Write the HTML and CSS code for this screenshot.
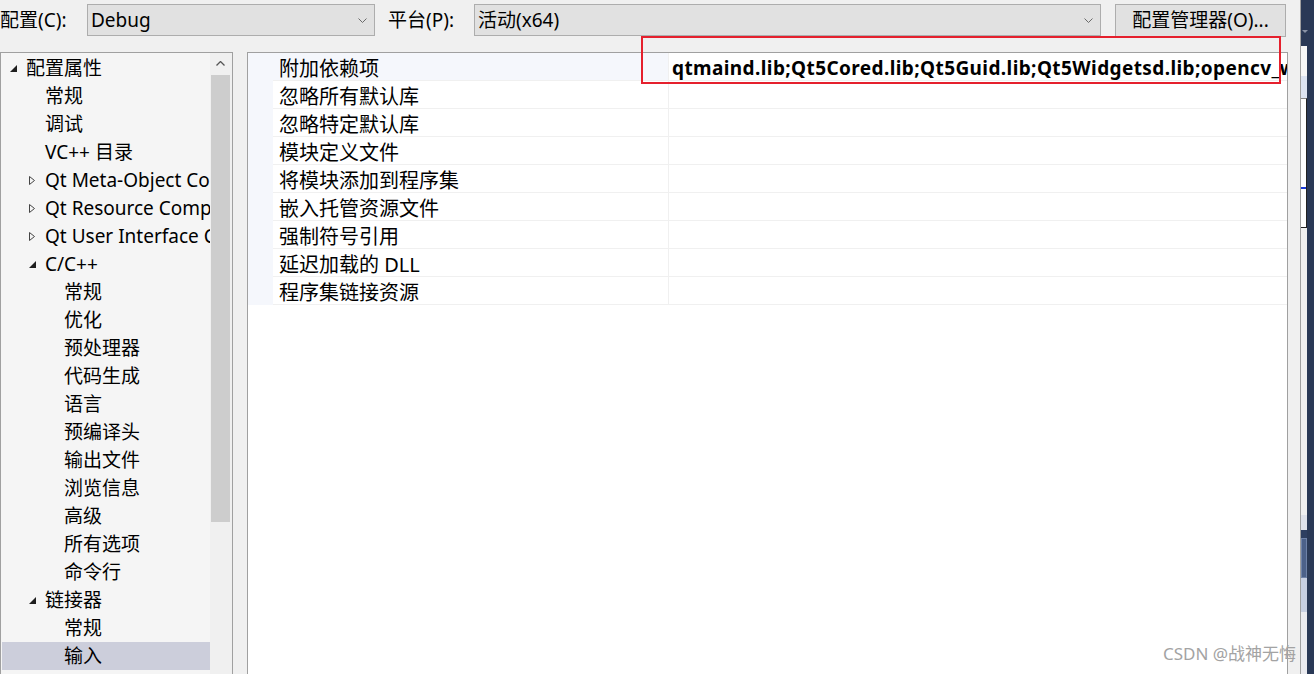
FILE: index.html
```html
<!DOCTYPE html>
<html lang="zh-CN">
<head>
	<meta charset="UTF-8">
	<title>属性页 - 链接器 输入</title>
	<link rel="stylesheet" href="styles.css">
</head>
<body>
<div class="page_wrap">
	<div class="dialog_wrap">
		<div class="header_wrap">
			<label class="header_label label_cfg">配置(C):</label>
			<div class="combo_box combo_cfg">
				<span class="combo_text">Debug</span>
				<svg class="combo_arrow" width="9" height="5" viewBox="0 0 9 5"><path d="M0.5 0.5 L4.5 4.5 L8.5 0.5" fill="none" stroke="#6a6a6a"/></svg>
			</div>
			<label class="header_label label_platform">平台(P):</label>
			<div class="combo_box combo_platform">
				<span class="combo_text">活动(x64)</span>
				<svg class="combo_arrow" width="9" height="5" viewBox="0 0 9 5"><path d="M0.5 0.5 L4.5 4.5 L8.5 0.5" fill="none" stroke="#6a6a6a"/></svg>
			</div>
			<button class="btn_manager">配置管理器(O)...</button>
		</div>
		<div class="body_wrap">
			<div class="tree_panel">
				<ul class="tree_list">
					<li class="tree_item lv1"><span class="twisty"><svg width="7" height="7" viewBox="0 0 7 7"><path d="M7 0 V7 H0 Z" fill="#1e1e1e"/></svg></span>配置属性</li>
					<li class="tree_item lv2 leaf">常规</li>
					<li class="tree_item lv2 leaf">调试</li>
					<li class="tree_item lv2 leaf">VC++ 目录</li>
					<li class="tree_item lv2"><span class="twisty"><svg width="6" height="9" viewBox="0 0 6 9"><path d="M0.5 0.5 L5.5 4.5 L0.5 8.5 Z" fill="none" stroke="#444"/></svg></span>Qt Meta-Object Compiler</li>
					<li class="tree_item lv2"><span class="twisty"><svg width="6" height="9" viewBox="0 0 6 9"><path d="M0.5 0.5 L5.5 4.5 L0.5 8.5 Z" fill="none" stroke="#444"/></svg></span>Qt Resource Compiler</li>
					<li class="tree_item lv2"><span class="twisty"><svg width="6" height="9" viewBox="0 0 6 9"><path d="M0.5 0.5 L5.5 4.5 L0.5 8.5 Z" fill="none" stroke="#444"/></svg></span>Qt User Interface Compiler</li>
					<li class="tree_item lv2"><span class="twisty"><svg width="7" height="7" viewBox="0 0 7 7"><path d="M7 0 V7 H0 Z" fill="#1e1e1e"/></svg></span>C/C++</li>
					<li class="tree_item lv3">常规</li>
					<li class="tree_item lv3">优化</li>
					<li class="tree_item lv3">预处理器</li>
					<li class="tree_item lv3">代码生成</li>
					<li class="tree_item lv3">语言</li>
					<li class="tree_item lv3">预编译头</li>
					<li class="tree_item lv3">输出文件</li>
					<li class="tree_item lv3">浏览信息</li>
					<li class="tree_item lv3">高级</li>
					<li class="tree_item lv3">所有选项</li>
					<li class="tree_item lv3">命令行</li>
					<li class="tree_item lv2"><span class="twisty"><svg width="7" height="7" viewBox="0 0 7 7"><path d="M7 0 V7 H0 Z" fill="#1e1e1e"/></svg></span>链接器</li>
					<li class="tree_item lv3">常规</li>
					<li class="tree_item lv3 on">输入</li>
				</ul>
				<div class="tree_scroll">
					<div class="scroll_btn"><svg width="9" height="5" viewBox="0 0 9 5"><path d="M0.5 4.5 L4.5 0.5 L8.5 4.5" fill="none" stroke="#555" stroke-width="1.3"/></svg></div>
					<div class="scroll_thumb"></div>
				</div>
			</div>
			<div class="grid_panel">
				<div class="grid_row on">
					<div class="grid_gutter"></div>
					<div class="grid_name">附加依赖项</div>
					<div class="grid_value">qtmaind.lib;Qt5Cored.lib;Qt5Guid.lib;Qt5Widgetsd.lib;opencv_world455d.lib;%(AdditionalDependencies)</div>
				</div>
				<div class="grid_row">
					<div class="grid_gutter"></div>
					<div class="grid_name">忽略所有默认库</div>
					<div class="grid_value"></div>
				</div>
				<div class="grid_row">
					<div class="grid_gutter"></div>
					<div class="grid_name">忽略特定默认库</div>
					<div class="grid_value"></div>
				</div>
				<div class="grid_row">
					<div class="grid_gutter"></div>
					<div class="grid_name">模块定义文件</div>
					<div class="grid_value"></div>
				</div>
				<div class="grid_row">
					<div class="grid_gutter"></div>
					<div class="grid_name">将模块添加到程序集</div>
					<div class="grid_value"></div>
				</div>
				<div class="grid_row">
					<div class="grid_gutter"></div>
					<div class="grid_name">嵌入托管资源文件</div>
					<div class="grid_value"></div>
				</div>
				<div class="grid_row">
					<div class="grid_gutter"></div>
					<div class="grid_name">强制符号引用</div>
					<div class="grid_value"></div>
				</div>
				<div class="grid_row">
					<div class="grid_gutter"></div>
					<div class="grid_name">延迟加载的 DLL</div>
					<div class="grid_value"></div>
				</div>
				<div class="grid_row">
					<div class="grid_gutter"></div>
					<div class="grid_name">程序集链接资源</div>
					<div class="grid_value"></div>
				</div>
			</div>
		</div>
	</div>
	<div class="side_strip">
		<div class="strip_col">
			<div class="blk blk_navy"><span class="blk_arrow"></span></div>
			<div class="blk blk_white"></div>
			<div class="blk blk_blue"></div>
			<div class="blk blk_frame"><span class="blk_mark"></span></div>
			<div class="blk blk_grey"></div>
			<div class="blk blk_pale"></div>
			<div class="blk blk_dark"></div>
			<div class="blk blk_steel"></div>
			<div class="blk blk_lav"></div>
			<div class="blk blk_rest"></div>
		</div>
		<div class="strip_navy"></div>
	</div>
	<div class="mark_box"></div>
	<div class="watermark">CSDN @战神无悔</div>
</div>
</body>
</html>
```

FILE: styles.css
```css
body,div,ul,li,label,button{margin:0;padding:0}
ul,li{list-style:none}
button{border:0 none;background-color:transparent;cursor:pointer}
body{background:#f0f0f0;font-family:'Noto Sans','Noto Sans CJK SC',sans-serif;font-size:19px;color:#000;overflow:hidden}
.page_wrap{position:relative;display:flex;width:1314px;height:674px;overflow:hidden}
.dialog_wrap{display:flex;flex-direction:column;width:1300px;height:674px;background:#f0f0f0}

/* 상단 */
.header_wrap{display:flex;align-items:flex-start;height:52px;padding-top:4px;box-sizing:border-box}
.header_label{height:32px;line-height:33px;white-space:nowrap}
.label_cfg{width:87px}
.label_platform{width:86px;margin-left:13px}
.combo_box{display:flex;align-items:center;justify-content:space-between;height:32px;box-sizing:border-box;border:1px solid #adadad;background:#e1e1e1;padding:0 7px 0 3px}
.combo_cfg{width:288px}
.combo_platform{width:627px}
.combo_text{line-height:31px;padding-top:1px;white-space:nowrap}
.combo_arrow{display:block}
.btn_manager{width:171px;height:33px;margin-left:14px;box-sizing:border-box;border:1px solid #adadad;background:#e1e1e1;font-family:inherit;font-size:19px;color:#000;line-height:31px}

.body_wrap{display:flex;flex:1;min-height:0}

/* 트리 */
.tree_panel{display:flex;width:233px;box-sizing:border-box;border:1px solid #a0a0a0;border-bottom:0 none;background:#f5f5f5}
.tree_list{flex:1;min-width:0;padding:1px 0 0 1px;overflow:hidden}
.tree_item{display:flex;align-items:center;height:28px;box-sizing:border-box;padding-top:1px;line-height:27px;white-space:nowrap;overflow:hidden}
.tree_item.lv1{padding-left:6px}
.tree_item.lv2{padding-left:25px}
.tree_item.lv2.leaf{padding-left:43px}
.tree_item.lv3{padding-left:62px}
.tree_item.on{background:#cccedb}
.twisty{display:flex;align-items:center;flex:none;width:18px;padding-left:2px;box-sizing:border-box}
.twisty svg{display:block}
.tree_scroll{display:flex;flex-direction:column;width:22px;flex:none;background:#f0f0f0}
.scroll_btn{display:flex;align-items:center;justify-content:center;height:22px;padding-right:2px;padding-bottom:2px;box-sizing:border-box}
.scroll_thumb{width:19px;height:447px;margin-left:1px;background:#cdcdcd}

/* 속성 그리드 */
.grid_panel{flex:none;width:1041px;margin-left:14px;box-sizing:border-box;border:1px solid #a0a0a0;border-bottom:0 none;background:#fff}
.grid_row{display:flex;height:28px}
.grid_gutter{width:25px;flex:none;background:#f5f7fc}
.grid_name{width:396px;flex:none;box-sizing:border-box;padding:3px 0 0 6px;border-right:1px solid #f0f0f0;border-bottom:1px solid #f0f0f0;font-size:20px;line-height:25px;white-space:nowrap;overflow:hidden}
.grid_row.on .grid_name{background:#f5f7fc}
.grid_value{flex:1;min-width:0;box-sizing:border-box;padding:3px 0 0 3px;border-bottom:1px solid #f0f0f0;line-height:25px;font-weight:bold;font-size:19px;letter-spacing:0.4px;white-space:nowrap;overflow:hidden}

/* 오른쪽 창 */
.side_strip{display:flex;width:14px;border-left:1px solid #a0a0a0;box-sizing:border-box}
.strip_col{display:flex;flex-direction:column;width:6px}
.strip_navy{width:7px;background:#2a3956}
.blk{flex:none}
.blk_navy{position:relative;height:46px;background:#2a3956}
.blk_arrow{position:absolute;left:1px;top:30px;width:0;height:0;border-left:3px solid transparent;border-right:3px solid transparent;border-top:3px solid #8a93a6}
.blk_white{height:30px;background:#f7f7f7}
.blk_blue{height:22px;background:#dde4f2}
.blk_frame{position:relative;height:130px;box-sizing:border-box;background:#fff;border-right:1px solid #222;border-bottom:1px solid #222;border-top:1px solid #888}
.blk_mark{position:absolute;left:0;top:88px;width:5px;height:2px;background:#1a3ad8}
.blk_grey{height:287px;background:#f0f0f0}
.blk_pale{height:15px;background:#dfe2ea}
.blk_dark{height:8px;background:#2e3f60}
.blk_steel{height:40px;box-sizing:border-box;background:#4c6189;border:1px solid #6f83a8}
.blk_lav{height:34px;background:#c8d0e2}
.blk_rest{flex:1;background:#ebebef}

/* 덮는 요소 */
.mark_box{position:absolute;left:641px;top:36px;width:640px;height:48px;box-sizing:border-box;border:2px solid #e5202d}
.watermark{position:absolute;left:1163px;top:642px;font-size:17px;line-height:24px;color:#a3a3a3;white-space:nowrap}
```
